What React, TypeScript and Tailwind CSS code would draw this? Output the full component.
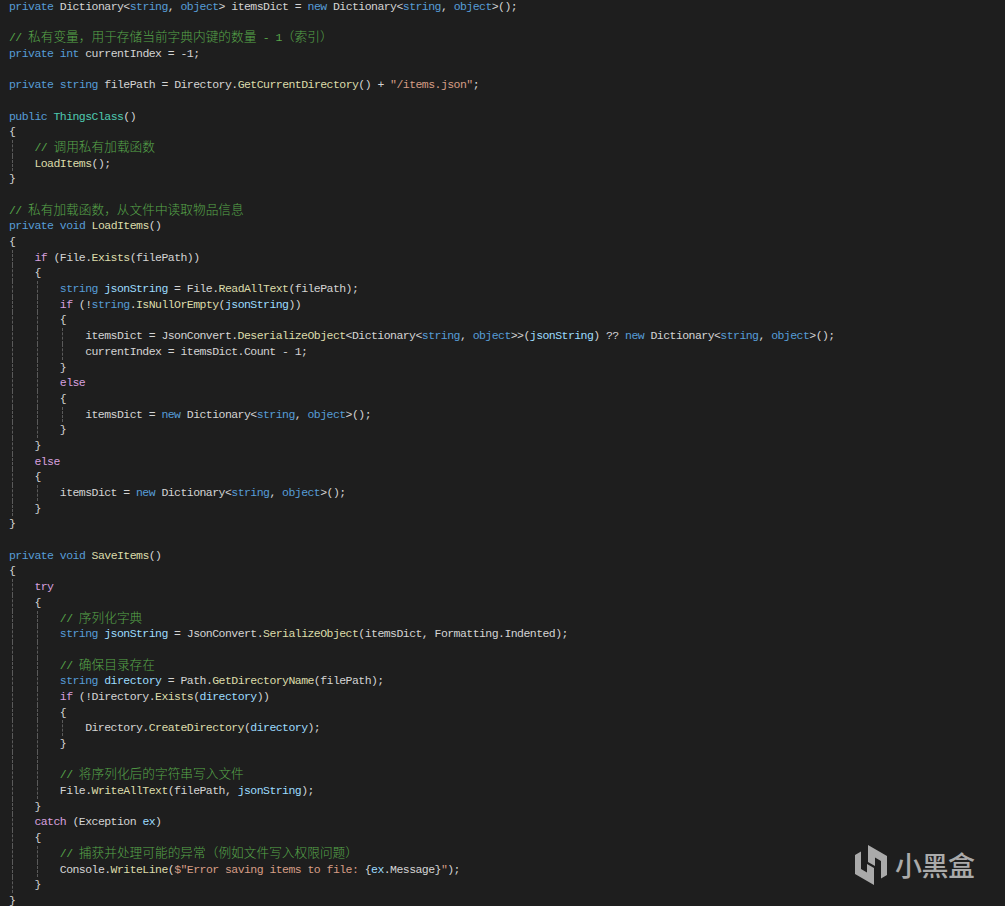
import type { ReactNode } from "react";

type Props = { children?: ReactNode };

const K = ({ children }: Props) => <span className="text-[#569cd6]">{children}</span>;
const C = ({ children }: Props) => <span className="text-[#d8a0df]">{children}</span>;
const V = ({ children }: Props) => <span className="text-[#9cdcfe]">{children}</span>;
const M = ({ children }: Props) => <span className="text-[#dcdcaa]">{children}</span>;
const T = ({ children }: Props) => <span className="text-[#4ec9b0]">{children}</span>;
const S = ({ children }: Props) => <span className="text-[#d69d85]">{children}</span>;

// comment text: the CJK runs are twice as wide as a latin cell
function Cm({ text }: { text: string }) {
  const parts = text.split(/([\u3000-\u9fff\uff00-\uffef]+)/);
  return (
    <span className="text-[#57a64a]">
      {parts.map((part, i) =>
        i % 2 === 1 ? (
          <span key={i} className="text-[12.7px] font-light tracking-normal">
            {part}
          </span>
        ) : (
          part
        ),
      )}
    </span>
  );
}

function Line({ n = 0, text = n, children }: { n?: number; text?: number; children?: ReactNode }) {
  return (
    <div className="flex h-[15.7px] pl-[9px] leading-[15.7px] whitespace-pre">
      {Array.from({ length: text }).map((_, i) => (
        <span key={i} className="h-full w-[25.4px] shrink-0 pl-[2.5px]">
          {i < n && <span className="block h-full border-l border-dashed border-[#5a5a5a]" />}
        </span>
      ))}
      <span>{children}</span>
    </div>
  );
}

function Logo() {
  return (
    <div className="absolute top-[845px] left-[855px] flex items-center gap-[8px] text-[#aaaaaa]">
      <svg width="32" height="40" viewBox="5 5 32 40" fill="currentColor">
        <path d="M5 15 11 11.500 11 29 17 32.500 17 24 24 28 24 45 5 34Z" />
        <path d="M37 35 31 38.500 31 21 25 17.500 25 26 18 22 18 5 37 16Z" />
      </svg>
      <span className="font-['Noto_Sans_CJK_SC',sans-serif] text-[27px] leading-[40px] font-medium">小黑盒</span>
    </div>
  );
}

export default function App() {
  return (
    <div className="relative h-[906px] w-[1005px] overflow-hidden bg-[#1e1e1e] font-['Liberation_Mono','Noto_Sans_CJK_SC',monospace] text-[11.5px] tracking-[-0.55px] text-[#d4d4d4]">
      <div className="-mt-[1.3px]">
        <Line>
          <K>private</K> Dictionary&lt;<K>string</K>, <K>object</K>&gt; itemsDict = <K>new</K> Dictionary&lt;<K>string</K>, <K>object</K>&gt;();
        </Line>
        <Line />
        <Line>
          <Cm text="// 私有变量，用于存储当前字典内键的数量 - 1（索引）" />
        </Line>
        <Line>
          <K>private</K> <K>int</K> currentIndex = -1;
        </Line>
        <Line />
        <Line>
          <K>private</K> <K>string</K> filePath = Directory.<M>GetCurrentDirectory</M>() + <S>"/items.json"</S>;
        </Line>
        <Line />
        <Line>
          <K>public</K> <T>ThingsClass</T>()
        </Line>
        <Line>{"{"}</Line>
        <Line n={1}>
          <Cm text="// 调用私有加载函数" />
        </Line>
        <Line n={1}>
          <M>LoadItems</M>();
        </Line>
        <Line>{"}"}</Line>
        <Line />
        <Line>
          <Cm text="// 私有加载函数，从文件中读取物品信息" />
        </Line>
        <Line>
          <K>private</K> <K>void</K> <M>LoadItems</M>()
        </Line>
        <Line>{"{"}</Line>
        <Line n={1}>
          <C>if</C> (File.<M>Exists</M>(filePath))
        </Line>
        <Line n={1}>{"{"}</Line>
        <Line n={2}>
          <K>string</K> <V>jsonString</V> = File.<M>ReadAllText</M>(filePath);
        </Line>
        <Line n={2}>
          <C>if</C> (!<K>string</K>.<M>IsNullOrEmpty</M>(<V>jsonString</V>))
        </Line>
        <Line n={2}>{"{"}</Line>
        <Line n={3}>
          itemsDict = JsonConvert.<M>DeserializeObject</M>&lt;Dictionary&lt;<K>string</K>, <K>object</K>&gt;&gt;(<V>jsonString</V>) ?? <K>new</K> Dictionary&lt;<K>string</K>, <K>object</K>&gt;();
        </Line>
        <Line n={3}>currentIndex = itemsDict.Count - 1;</Line>
        <Line n={2}>{"}"}</Line>
        <Line n={2}>
          <C>else</C>
        </Line>
        <Line n={2}>{"{"}</Line>
        <Line n={3}>
          itemsDict = <K>new</K> Dictionary&lt;<K>string</K>, <K>object</K>&gt;();
        </Line>
        <Line n={2}>{"}"}</Line>
        <Line n={1}>{"}"}</Line>
        <Line n={1}>
          <C>else</C>
        </Line>
        <Line n={1}>{"{"}</Line>
        <Line n={2}>
          itemsDict = <K>new</K> Dictionary&lt;<K>string</K>, <K>object</K>&gt;();
        </Line>
        <Line n={1}>{"}"}</Line>
        <Line>{"}"}</Line>
        <Line />
        <Line>
          <K>private</K> <K>void</K> <M>SaveItems</M>()
        </Line>
        <Line>{"{"}</Line>
        <Line n={1}>
          <C>try</C>
        </Line>
        <Line n={1}>{"{"}</Line>
        <Line n={2}>
          <Cm text="// 序列化字典" />
        </Line>
        <Line n={2}>
          <K>string</K> <V>jsonString</V> = JsonConvert.<M>SerializeObject</M>(itemsDict, Formatting.Indented);
        </Line>
        <Line n={2} />
        <Line n={2}>
          <Cm text="// 确保目录存在" />
        </Line>
        <Line n={2}>
          <K>string</K> <V>directory</V> = Path.<M>GetDirectoryName</M>(filePath);
        </Line>
        <Line n={2}>
          <C>if</C> (!Directory.<M>Exists</M>(<V>directory</V>))
        </Line>
        <Line n={2}>{"{"}</Line>
        <Line n={3}>
          Directory.<M>CreateDirectory</M>(<V>directory</V>);
        </Line>
        <Line n={2}>{"}"}</Line>
        <Line n={2} />
        <Line n={2}>
          <Cm text="// 将序列化后的字符串写入文件" />
        </Line>
        <Line n={2}>
          File.<M>WriteAllText</M>(filePath, <V>jsonString</V>);
        </Line>
        <Line n={1}>{"}"}</Line>
        <Line n={1}>
          <C>catch</C> (Exception <V>ex</V>)
        </Line>
        <Line n={1}>{"{"}</Line>
        <Line n={2}>
          <Cm text="// 捕获并处理可能的异常（例如文件写入权限问题）" />
        </Line>
        <Line n={2}>
          Console.<M>WriteLine</M>(<S>$"Error saving items to file: </S>
          {"{"}
          <V>ex</V>.Message{"}"}
          <S>"</S>);
        </Line>
        <Line n={1}>{"}"}</Line>
        <Line>{"}"}</Line>
      </div>
      <Logo />
    </div>
  );
}
